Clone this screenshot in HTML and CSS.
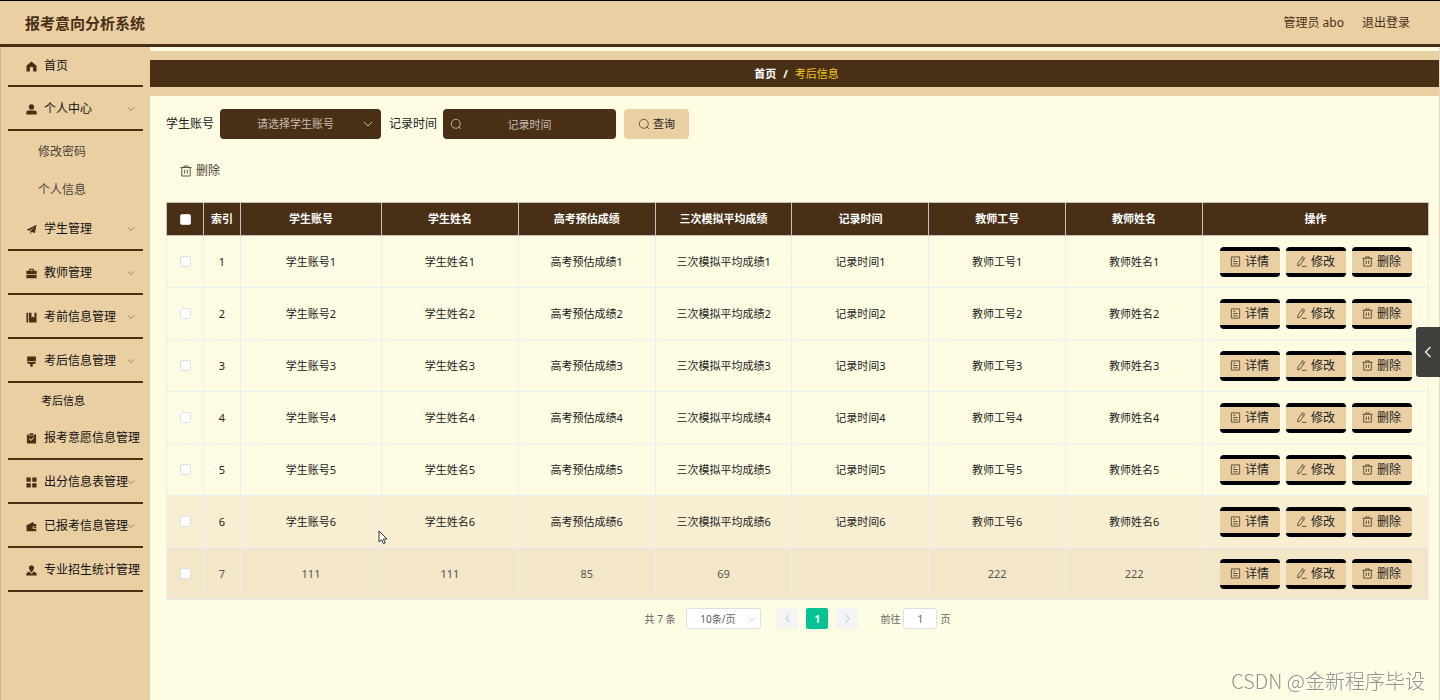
FILE: index.html
```
<!DOCTYPE html>
<html lang="zh-CN">
<head>
<meta charset="utf-8">
<meta name="viewport" content="width=device-width, initial-scale=1">
<title>报考意向分析系统</title>
<link rel="stylesheet" href="styles.css">
</head>
<body>
<svg class="sprite" aria-hidden="true">
  <symbol id="home" viewBox="0 0 12 12"><path fill="currentColor" d="M6 .5 11.500 5.200V11.500H7.800V8a1.800 1.800 0 0 0-3.600 0v3.500H.5V5.200z"/></symbol>
  <symbol id="user" viewBox="0 0 12 12"><path fill="currentColor" d="M6 .3a2.900 2.900 0 0 1 0 5.800A2.900 2.900 0 0 1 6 .3zM.3 11.500V9.400C.3 8 1.300 7.200 2.600 7.200h6.800c1.300 0 2.300.8 2.300 2.200v2.100z"/></symbol>
  <symbol id="plane" viewBox="0 0 12 12"><path fill="currentColor" d="M11.500.7 9.600 10 6.200 8.500 4.700 11.200V7.700L9 3.400 3.600 7.300.6 6.200z"/></symbol>
  <symbol id="case" viewBox="0 0 12 12"><path fill="currentColor" fill-rule="evenodd" d="M3.400.8h5.200v2.200h3v3.500H.4V3h3zm1.200 1.100V3h2.800V1.900zM.4 7.400h11.200v3.800H.4z"/></symbol>
  <symbol id="book" viewBox="0 0 12 12"><path fill="currentColor" d="M.5.800h1.900v10.700H.5zM3.300.8H6v5.400l1.600-1.200 1.600 1.200V.8h2.300v10.700H3.300z"/></symbol>
  <symbol id="brush" viewBox="0 0 12 12"><path fill="currentColor" d="M1.200.6h9.600v5.200H1.200zM1.200 6.600h9.600v1.300L7.300 9v2.600H4.700V9L1.200 7.900z"/></symbol>
  <symbol id="claim" viewBox="0 0 12 12"><path fill="currentColor" fill-rule="evenodd" d="M1 1.500h2.100v1.300h5.800V1.500H11v10H1zM4 .3h4v1.800H4zm-.9 5.900L5.400 8.700 9 5l-.7-.7-2.900 3-1.500-1.700z"/></symbol>
  <symbol id="grid" viewBox="0 0 12 12"><path fill="currentColor" d="M.5.5h4.700v4.700H.5zM6.800.5h4.700v4.700H6.800zM.5 6.800h4.700v4.700H.5zM6.800 6.800h4.700v4.700H6.800z"/></symbol>
  <symbol id="wallet" viewBox="0 0 12 12"><path fill="currentColor" d="M2 4 7.500 1l1.300 2.400h2.400v2.200H8.500a1.500 1.500 0 0 0 0 3h2.700V11.300H.6V4zM8.300 6.400h2.900v1.400H8.300z"/></symbol>
  <symbol id="person" viewBox="0 0 12 12"><path fill="currentColor" d="M6 .3a2.900 2.900 0 0 1 1.900 5.100L7 7.200l-1 1.300-1-1.300-.9-1.800A2.900 2.900 0 0 1 6 .3zM3.600 7.200 6 9.700l2.400-2.500 2.100.9c.8.400 1.200 1 1.200 1.800v1.600H.3V9.900c0-.8.400-1.400 1.200-1.800z"/></symbol>
  <symbol id="down" viewBox="0 0 12 12"><path fill="none" stroke="currentColor" stroke-width="1.200" d="m1 3.500 5 5 5-5"/></symbol>
  <symbol id="left" viewBox="0 0 12 12"><path fill="none" stroke="currentColor" stroke-width="1.200" d="M8.500 1 3.500 6l5 5"/></symbol>
  <symbol id="right" viewBox="0 0 12 12"><path fill="none" stroke="currentColor" stroke-width="1.200" d="m3.500 1 5 5-5 5"/></symbol>
  <symbol id="search" viewBox="0 0 12 12"><path fill="none" stroke="currentColor" stroke-width=".9" d="M5.800 1.300a4.500 4.500 0 1 1 0 9 4.500 4.500 0 0 1 0-9zM9 9l2 2"/></symbol>
  <symbol id="trash" viewBox="0 0 12 12"><path fill="none" stroke="currentColor" stroke-width=".9" d="M.5 2.500h11M4 2.500v-1.500h4v1.500M1.800 2.500V11h8.400V2.500M4.700 4.800v3.900M7.300 4.800v3.900"/></symbol>
  <symbol id="doc" viewBox="0 0 12 12"><path fill="none" stroke="currentColor" stroke-width=".9" d="M1.500 1h9v10h-9zM3.500 3.500h2.500M3.500 6h5M3.500 8.500h5"/></symbol>
  <symbol id="edit" viewBox="0 0 12 12"><path fill="none" stroke="currentColor" stroke-width=".9" d="M7.200.8 9.600 2.500 4.600 9.700 1.800 10.900l.3-3zM6.200 2.500l2.200 1.600M6.300 11.300h5.200"/></symbol>
</svg>

<header class="topbar">
  <h1 class="brand">报考意向分析系统</h1>
  <div class="account"><span>管理员 abo</span><a href="#">退出登录</a></div>
</header>

<div class="layout">
  <nav class="sidebar" aria-label="主菜单">
    <a class="item first" href="#"><svg class="icon"><use href="#home"/></svg>首页</a>
    <a class="item" href="#"><svg class="icon"><use href="#user"/></svg>个人中心<svg class="arrow"><use href="#down"/></svg></a>
    <div class="submenu">
      <a class="sub" href="#">修改密码</a>
      <a class="sub" href="#">个人信息</a>
    </div>
    <a class="item" href="#"><svg class="icon"><use href="#plane"/></svg>学生管理<svg class="arrow"><use href="#down"/></svg></a>
    <a class="item" href="#"><svg class="icon"><use href="#case"/></svg>教师管理<svg class="arrow"><use href="#down"/></svg></a>
    <a class="item" href="#"><svg class="icon"><use href="#book"/></svg>考前信息管理<svg class="arrow"><use href="#down"/></svg></a>
    <a class="item" href="#"><svg class="icon"><use href="#brush"/></svg>考后信息管理<svg class="arrow"><use href="#down"/></svg></a>
    <div class="submenu">
      <a class="sub current" href="#" aria-current="page">考后信息</a>
    </div>
    <a class="item" href="#"><svg class="icon"><use href="#claim"/></svg>报考意愿信息管理</a>
    <a class="item" href="#"><svg class="icon"><use href="#grid"/></svg>出分信息表管理<svg class="arrow"><use href="#down"/></svg></a>
    <a class="item" href="#"><svg class="icon"><use href="#wallet"/></svg>已报考信息管理<svg class="arrow"><use href="#down"/></svg></a>
    <a class="item" href="#"><svg class="icon"><use href="#person"/></svg>专业招生统计管理</a>
  </nav>

  <main class="main">
    <div class="crumb-band">
      <nav class="crumbs" aria-label="面包屑"><a href="#">首页</a><span>/</span><span class="here">考后信息</span></nav>
    </div>

    <section class="content">
      <form class="filters">
        <div class="field">
          <label for="account">学生账号</label>
          <div class="control">
            <select id="account" class="dark account-select"><option>请选择学生账号</option></select>
            <svg class="icon tail"><use href="#down"/></svg>
          </div>
        </div>
        <div class="field">
          <label for="time">记录时间</label>
          <div class="control">
            <input id="time" class="dark time-input" type="text" placeholder="记录时间">
            <svg class="icon lead"><use href="#search"/></svg>
          </div>
        </div>
        <button class="query" type="button"><svg class="icon"><use href="#search"/></svg>查询</button>
      </form>

      <div class="toolbar"><button class="bulk" type="button"><svg class="icon"><use href="#trash"/></svg>删除</button></div>

      <table class="grid">
        <colgroup><col class="narrow"><col class="narrow"><col class="first-data"><col><col><col><col><col><col><col class="wide"></colgroup>
        <thead>
          <tr><th><input class="check" type="checkbox" aria-label="全选"></th><th>索引</th><th>学生账号</th><th>学生姓名</th><th>高考预估成绩</th><th>三次模拟平均成绩</th><th>记录时间</th><th>教师工号</th><th>教师姓名</th><th>操作</th></tr>
        </thead>
        <tbody>
          <tr><td><input class="check" type="checkbox" aria-label="选择第1行"></td><td>1</td><td>学生账号1</td><td>学生姓名1</td><td>高考预估成绩1</td><td>三次模拟平均成绩1</td><td>记录时间1</td><td>教师工号1</td><td>教师姓名1</td><td><div class="ops"><button class="op" type="button"><svg class="icon"><use href="#doc"/></svg>详情</button><button class="op" type="button"><svg class="icon"><use href="#edit"/></svg>修改</button><button class="op" type="button"><svg class="icon"><use href="#trash"/></svg>删除</button></div></td></tr>
          <tr><td><input class="check" type="checkbox" aria-label="选择第2行"></td><td>2</td><td>学生账号2</td><td>学生姓名2</td><td>高考预估成绩2</td><td>三次模拟平均成绩2</td><td>记录时间2</td><td>教师工号2</td><td>教师姓名2</td><td><div class="ops"><button class="op" type="button"><svg class="icon"><use href="#doc"/></svg>详情</button><button class="op" type="button"><svg class="icon"><use href="#edit"/></svg>修改</button><button class="op" type="button"><svg class="icon"><use href="#trash"/></svg>删除</button></div></td></tr>
          <tr><td><input class="check" type="checkbox" aria-label="选择第3行"></td><td>3</td><td>学生账号3</td><td>学生姓名3</td><td>高考预估成绩3</td><td>三次模拟平均成绩3</td><td>记录时间3</td><td>教师工号3</td><td>教师姓名3</td><td><div class="ops"><button class="op" type="button"><svg class="icon"><use href="#doc"/></svg>详情</button><button class="op" type="button"><svg class="icon"><use href="#edit"/></svg>修改</button><button class="op" type="button"><svg class="icon"><use href="#trash"/></svg>删除</button></div></td></tr>
          <tr><td><input class="check" type="checkbox" aria-label="选择第4行"></td><td>4</td><td>学生账号4</td><td>学生姓名4</td><td>高考预估成绩4</td><td>三次模拟平均成绩4</td><td>记录时间4</td><td>教师工号4</td><td>教师姓名4</td><td><div class="ops"><button class="op" type="button"><svg class="icon"><use href="#doc"/></svg>详情</button><button class="op" type="button"><svg class="icon"><use href="#edit"/></svg>修改</button><button class="op" type="button"><svg class="icon"><use href="#trash"/></svg>删除</button></div></td></tr>
          <tr><td><input class="check" type="checkbox" aria-label="选择第5行"></td><td>5</td><td>学生账号5</td><td>学生姓名5</td><td>高考预估成绩5</td><td>三次模拟平均成绩5</td><td>记录时间5</td><td>教师工号5</td><td>教师姓名5</td><td><div class="ops"><button class="op" type="button"><svg class="icon"><use href="#doc"/></svg>详情</button><button class="op" type="button"><svg class="icon"><use href="#edit"/></svg>修改</button><button class="op" type="button"><svg class="icon"><use href="#trash"/></svg>删除</button></div></td></tr>
          <tr class="fading"><td><input class="check" type="checkbox" aria-label="选择第6行"></td><td>6</td><td>学生账号6</td><td>学生姓名6</td><td>高考预估成绩6</td><td>三次模拟平均成绩6</td><td>记录时间6</td><td>教师工号6</td><td>教师姓名6</td><td><div class="ops"><button class="op" type="button"><svg class="icon"><use href="#doc"/></svg>详情</button><button class="op" type="button"><svg class="icon"><use href="#edit"/></svg>修改</button><button class="op" type="button"><svg class="icon"><use href="#trash"/></svg>删除</button></div></td></tr>
          <tr class="hovered"><td><input class="check" type="checkbox" aria-label="选择第7行"></td><td>7</td><td>111</td><td>111</td><td>85</td><td>69</td><td></td><td>222</td><td>222</td><td><div class="ops"><button class="op" type="button"><svg class="icon"><use href="#doc"/></svg>详情</button><button class="op" type="button"><svg class="icon"><use href="#edit"/></svg>修改</button><button class="op" type="button"><svg class="icon"><use href="#trash"/></svg>删除</button></div></td></tr>
        </tbody>
      </table>

      <div class="pager">
        <span>共 7 条</span>
        <div class="control size">
          <select class="size-select" aria-label="每页条数"><option>10条/页</option></select>
          <svg class="icon tail"><use href="#down"/></svg>
        </div>
        <div class="pages">
          <button class="page" type="button" aria-label="上一页" disabled><svg class="icon"><use href="#left"/></svg></button>
          <button class="page active" type="button">1</button>
          <button class="page" type="button" aria-label="下一页" disabled><svg class="icon"><use href="#right"/></svg></button>
        </div>
        <label class="jump">前往<input type="text" value="1">页</label>
      </div>
    </section>
  </main>
</div>

<button class="drawer" type="button" aria-label="展开"><svg class="icon"><use href="#left"/></svg></button>
<div class="watermark">CSDN @金新程序毕设</div>
<svg class="cursor" viewBox="0 0 10 15" aria-hidden="true"><path fill="#fff" stroke="#333" d="M1 1v11l2.600-2.300 1.800 4 1.800-.8-1.800-3.900H9z"/></svg>
</body>
</html>
```
FILE: styles.css
```
:root {
  --tan: #eacfa3;
  --brown: #492f15;
  --cream: #fefde3;
  --line: #ebeef0;
}

* { box-sizing: border-box; }

body {
  margin: 0;
  min-height: 100vh;
  display: flex;
  flex-direction: column;
  background: var(--cream);
  color: #222;
  font: 11px/16px "Noto Sans", "Noto Sans CJK SC", sans-serif;
}

a { color: inherit; text-decoration: none; }
button, input, select { margin: 0; font: inherit; color: inherit; }
button { padding: 0; cursor: pointer; }

.sprite { position: absolute; width: 0; height: 0; }
.icon { width: 12px; height: 12px; flex: none; }

.topbar {
  display: flex;
  align-items: center;
  justify-content: space-between;
  height: 47px;
  padding: 0 30px 0 25px;
  background: var(--tan);
  border-top: 1px solid #000;
  border-bottom: 3px solid var(--brown);
  color: var(--brown);
}
.brand { margin: 0; font-size: 15px; line-height: 24px; }
.account { display: flex; gap: 18px; font-size: 12px; }

.layout { flex: 1; display: flex; }

.sidebar {
  flex: none;
  width: 150px;
  padding: 0 7px;
  background: var(--tan);
  border-left: 1px solid #d0b48c;
  font-size: 12px;
}
.item {
  position: relative;
  display: flex;
  align-items: center;
  gap: 7px;
  height: 44px;
  padding: 2px 0 0 18px;
  border-bottom: 2px solid var(--brown);
  color: #111;
  white-space: nowrap;
}
.item.first { height: 40px; padding-top: 0; }
.item .icon { width: 11px; height: 11px; color: var(--brown); }
.arrow {
  position: absolute;
  right: 8px;
  width: 8px;
  height: 8px;
  color: #8a7355;
}
.sub {
  display: flex;
  align-items: center;
  height: 38px;
  padding: 4px 0 0 30px;
  color: #4a4238;
}
.sub.current { height: 33px; padding: 2px 0 0 33px; color: #111; font-size: 11px; }

.main { flex: 1; min-width: 0; border-right: 1px solid #dfddc6; }

.crumb-band { margin-top: 4px; padding: 9px 0; background: var(--tan); }
.crumbs {
  display: flex;
  align-items: center;
  justify-content: center;
  gap: 7px;
  height: 27px;
  padding-left: 4px;
  background: var(--brown);
  color: #fff;
  font-weight: bold;
}
.here { color: #f5c914; font-weight: normal; }

.content { padding: 13px 10px 20px 16px; }

.filters { display: flex; align-items: center; gap: 8px; }
.field { display: flex; align-items: center; gap: 6px; }
.field label { font-size: 12px; }
.control { position: relative; display: flex; }
.control .icon { position: absolute; top: 9px; pointer-events: none; }
.control .tail { right: 7px; }
.control .lead { left: 7px; }
.dark {
  height: 30px;
  border: 0;
  border-radius: 4px;
  background: var(--brown);
  color: #c6bdb2;
  text-align: center;
}
.dark + .icon { color: #c6bdb2; }
.dark::placeholder { color: #c6bdb2; opacity: 1; }
select { appearance: none; text-align: center; text-align-last: center; }
.account-select { width: 161px; padding: 0 18px 0 8px; }
.dark + .tail { width: 10px; height: 10px; top: 10px; right: 8px; }
.time-input { width: 173px; padding: 0 20px; }
.query {
  display: flex;
  align-items: center;
  justify-content: center;
  gap: 3px;
  width: 65px;
  height: 30px;
  border: 0;
  border-radius: 4px;
  background: var(--tan);
}
.query .icon { color: #5a4a35; }

.toolbar { display: flex; padding: 17px 14px 16px; }
.bulk {
  display: flex;
  align-items: center;
  gap: 4px;
  height: 30px;
  border: 0;
  background: transparent;
  color: #4a4238;
  font-size: 12px;
}

.grid { width: 100%; table-layout: fixed; border-collapse: collapse; }
.grid th, .grid td { padding: 0; border: 1px solid var(--line); text-align: center; }
.grid th { height: 33px; background: var(--brown); color: #fff; border-color: #c9c3ba; }
.grid td { height: 52px; }
.narrow { width: 37px; }
.first-data { width: 141px; }
.wide { width: 226px; }
.fading { background: #f8eed2; }
.hovered { background: #f4e6c8; color: #555; }

.check {
  appearance: none;
  display: block;
  width: 11px;
  height: 11px;
  margin: 0 auto;
  border: 1px solid #dcdfe6;
  border-radius: 2px;
  background: #fff;
}

.ops { display: flex; justify-content: center; gap: 6px; }
.op {
  display: flex;
  align-items: center;
  justify-content: center;
  gap: 4px;
  width: 60px;
  height: 30px;
  border: solid #000;
  border-width: 4px 0;
  border-radius: 4px;
  background: var(--tan);
  color: #222;
  font-size: 12px;
}
.op .icon { width: 11px; height: 11px; color: #4a3c2a; }

.pager {
  display: flex;
  align-items: center;
  justify-content: center;
  padding-top: 8px;
  font-size: 10px;
  color: #606266;
}
.size { margin: 0 15px 0 11px; }
.size-select {
  width: 75px;
  height: 21px;
  padding: 0 14px 0 2px;
  border: 1px solid #dcdfe6;
  border-radius: 3px;
  background: #fff;
}
.size .icon { top: 7px; right: 5px; width: 8px; height: 8px; color: #c0c4cc; }
.pages { display: flex; gap: 8px; }
.page {
  display: flex;
  align-items: center;
  justify-content: center;
  width: 22px;
  height: 21px;
  border: 0;
  border-radius: 2px;
  background: #f4f4f5;
  color: #b4b8c0;
}
.page .icon { width: 9px; height: 9px; }
.page.active { background: #05c293; color: #fff; font-weight: bold; }
.jump { display: flex; align-items: center; gap: 3px; margin-left: 22px; }
.jump input {
  width: 34px;
  height: 21px;
  padding: 0;
  border: 1px solid #dcdfe6;
  border-radius: 3px;
  background: #fff;
  text-align: center;
}

.drawer {
  position: fixed;
  right: 0;
  top: 327px;
  display: flex;
  align-items: center;
  justify-content: center;
  width: 24px;
  height: 50px;
  border: 0;
  border-radius: 3px 0 0 3px;
  background: #3f3f3b;
  color: #fff;
}
.watermark {
  position: fixed;
  right: 15px;
  bottom: 4px;
  color: #93938a;
  font-family: "Noto Sans CJK SC", sans-serif;
  font-size: 20px;
  font-weight: 300;
  line-height: 30px;
  text-shadow: 1px 1px 0 #fff;
}
.cursor { position: absolute; left: 378px; top: 530px; width: 10px; height: 15px; }
```
